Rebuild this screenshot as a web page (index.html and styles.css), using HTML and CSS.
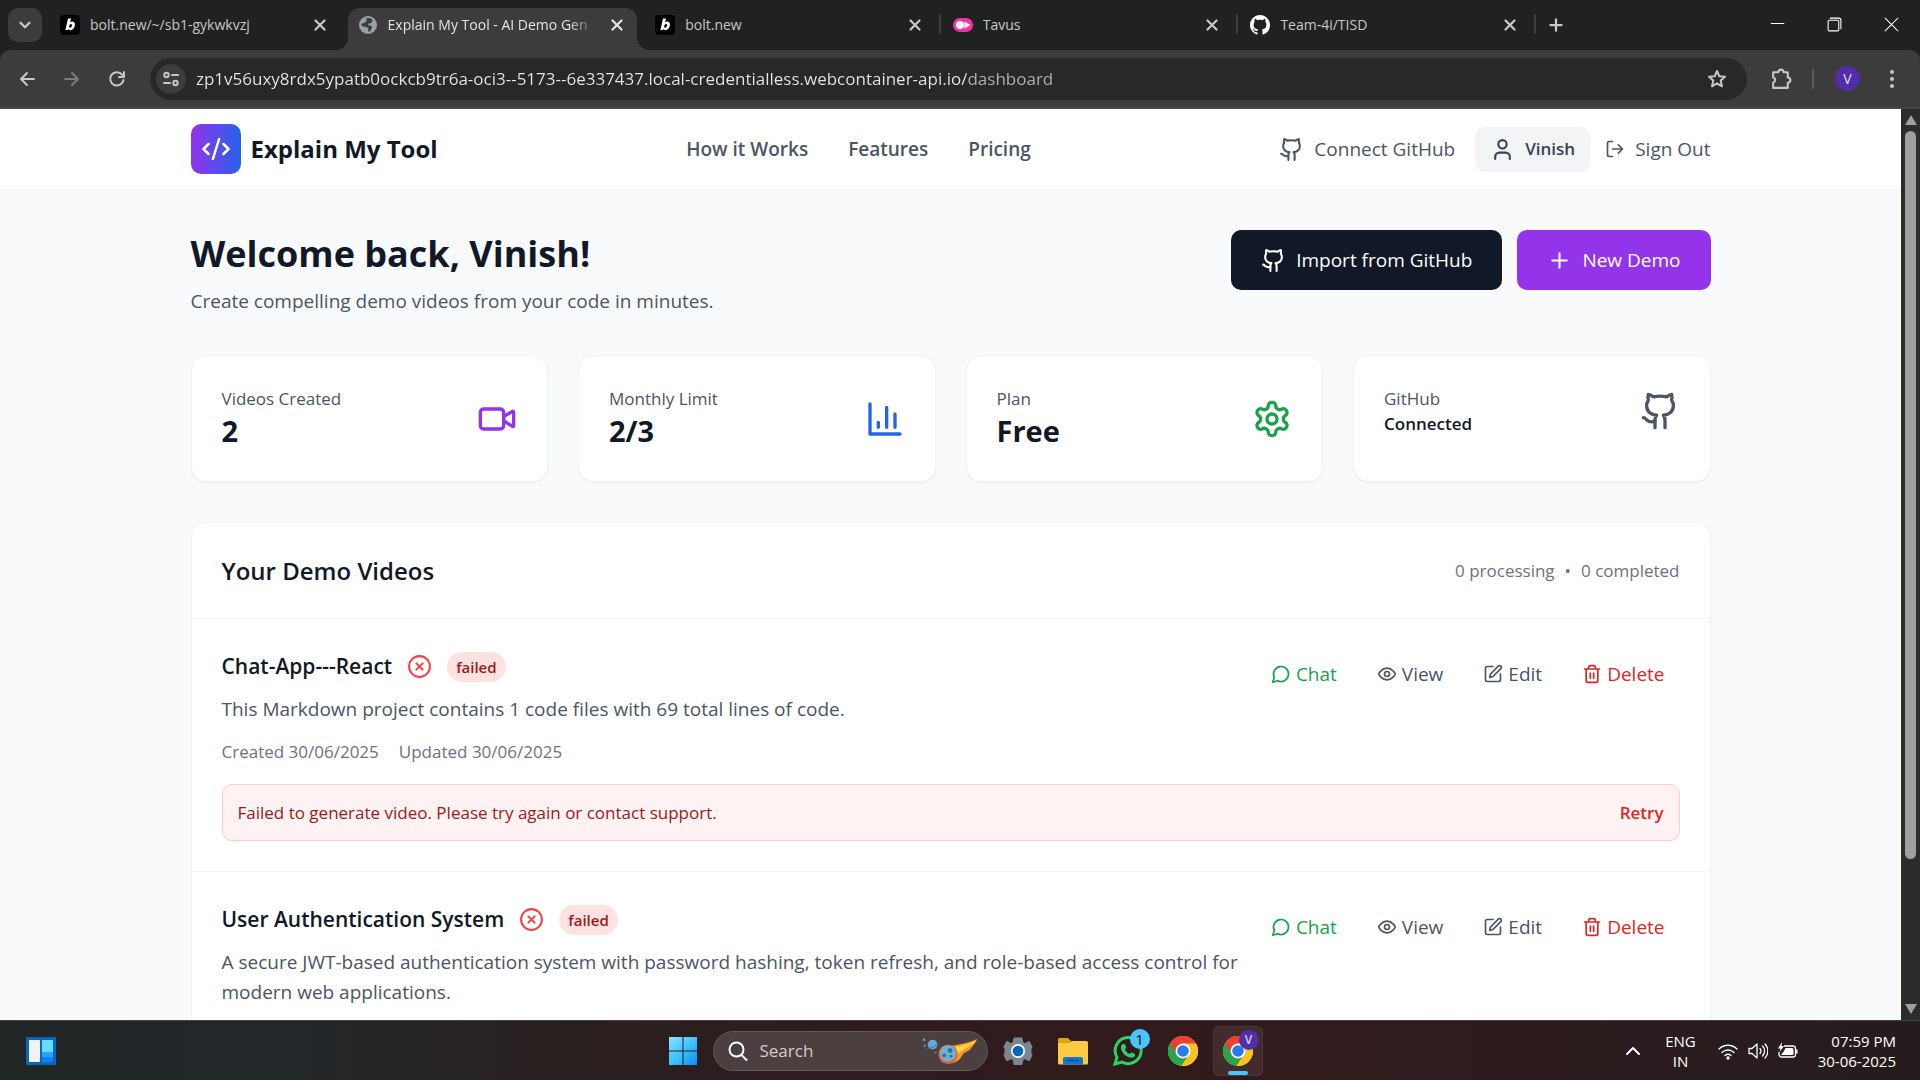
FILE: index.html
```html
<!DOCTYPE html>
<html lang="en">
<head>
<meta charset="utf-8">
<title>Explain My Tool - AI Demo Generator</title>
<meta name="viewport" content="width=device-width, initial-scale=1">
<link rel="stylesheet" href="styles.css">
</head>
<body>
<svg class="sprite" aria-hidden="true">
  <symbol id="github" viewBox="0 0 24 24"><path d="M15 22v-4a4.8 4.8 0 0 0-1-3.5c3 0 6-2 6-5.5.08-1.25-.27-2.48-1-3.5.28-1.15.28-2.35 0-3.5 0 0-1 0-3 1.5-2.64-.5-5.36-.5-8 0C6 2 5 2 5 2c-.3 1.15-.3 2.35 0 3.5A5.403 5.403 0 0 0 4 9c0 3.5 3 5.5 6 5.5-.39.49-.68 1.05-.85 1.65-.17.6-.22 1.23-.15 1.85v4"/><path d="M9 18c-4.51 2-5-2-7-2"/></symbol>
  <symbol id="x-circle" viewBox="0 0 24 24"><circle cx="12" cy="12" r="10"/><path d="m15 9-6 6M9 9l6 6"/></symbol>
  <symbol id="chat" viewBox="0 0 24 24"><path d="M7.9 20A9 9 0 1 0 4 16.1L2 22Z"/></symbol>
  <symbol id="eye" viewBox="0 0 24 24"><path d="M2 12s3-7 10-7 10 7 10 7-3 7-10 7-10-7-10-7Z"/><circle cx="12" cy="12" r="3"/></symbol>
  <symbol id="edit" viewBox="0 0 24 24"><path d="M12 3H5a2 2 0 0 0-2 2v14a2 2 0 0 0 2 2h14a2 2 0 0 0 2-2v-7"/><path d="M18.375 2.625a2.121 2.121 0 1 1 3 3L12 15l-4 1 1-4Z"/></symbol>
  <symbol id="trash" viewBox="0 0 24 24"><path d="M3 6h18M19 6v14a2 2 0 0 1-2 2H7a2 2 0 0 1-2-2V6M8 6V4a2 2 0 0 1 2-2h4a2 2 0 0 1 2 2v2M10 11v6M14 11v6"/></symbol>
  <symbol id="close" viewBox="0 0 16 16"><path d="M4 4l8 8M12 4L4 12"/></symbol>
  <symbol id="bolt" viewBox="0 0 20 20"><rect width="20" height="20" rx="4" fill="#000" stroke="none"/><path fill="#fff" stroke="none" fill-rule="evenodd" d="M8 3.500h3l-.8 3.700c.6-.5 1.200-.7 1.900-.7 2 0 3.200 1.400 2.800 3.800-.4 2.800-2.300 4.900-4.500 4.900-1 0-1.700-.4-2.100-1.100l-.4.900H5.400zM9.600 9.800l-.5 2.300c.2.500.6.700 1.100.7 1 0 1.700-1 1.800-2.200.1-.9-.3-1.500-1-1.500-.6 0-1 .3-1.400.7z"/></symbol>
  <symbol id="chrome" viewBox="0 0 30 30"><circle cx="15" cy="15" r="15" fill="#fcc31e"/><path d="M15 15 2 7.500A15 15 0 0 0 12.500 29.800L21.500 18.700Z" fill="#2ba24c"/><path d="M15 15H28.500L28 7.500A15 15 0 0 0 2 7.500L8.500 18.700Z" fill="#e94235"/><path d="M8.500 18.700 2 7.500A15 15 0 0 0 13.500 29.900L20 19z" fill="#2ba24c"/><path d="M15 7.500H28A15 15 0 0 1 13.500 29.900L21.500 18.700Z" fill="#fcc31e"/><circle cx="15" cy="15" r="7.500" fill="#fff"/><circle cx="15" cy="15" r="5.800" fill="#2a7bea"/></symbol>
</svg>

<header class="browser">
  <div class="tabstrip">
    <button class="tab-search" aria-label="Search tabs"><svg class="line" viewBox="0 0 16 16"><path d="m4 6 4 4 4-4"/></svg></button>
    <div class="tabs">
      <div class="tab">
        <svg class="favicon"><use href="#bolt"/></svg><button class="tab-title">bolt.new/~/sb1-gykwkvzj</button>
        <button class="tab-close" aria-label="Close tab"><svg class="line"><use href="#close"/></svg></button>
      </div>
      <div class="tab tab-active">
        <svg class="favicon" viewBox="0 0 20 20"><circle cx="10" cy="10" r="9" fill="#9aa0a6"/><path d="M8 3.500c2-1 5-.5 6.500 1.500l-1 3-3 .5-.5 2h3l1 2-2 4h-2l.5-3-2-1.500-4-.5L3 9l3-1 2-2z" fill="#3c3c3c"/><path d="M5 4.500 9 4 8 7 4.500 8z" fill="#9aa0a6"/></svg><button class="tab-title">Explain My Tool - AI Demo Gen</button>
        <button class="tab-close" aria-label="Close tab"><svg class="line"><use href="#close"/></svg></button>
      </div>
      <div class="tab tab-divided">
        <svg class="favicon"><use href="#bolt"/></svg><button class="tab-title">bolt.new</button>
        <button class="tab-close" aria-label="Close tab"><svg class="line"><use href="#close"/></svg></button>
      </div>
      <div class="tab tab-divided">
        <svg class="favicon" viewBox="0 0 20 20"><rect y="3" width="20" height="14" rx="7" fill="#fb2fa5"/><circle cx="7" cy="10" r="4" fill="#fff"/><path d="m11.500 6.500 6 3.500-6 3.500z" fill="#fff"/></svg><button class="tab-title">Tavus</button>
        <button class="tab-close" aria-label="Close tab"><svg class="line"><use href="#close"/></svg></button>
      </div>
      <div class="tab tab-divided">
        <svg class="favicon" viewBox="0 0 16 16"><path fill="#fff" d="M8 0C3.580 0 0 3.580 0 8c0 3.540 2.290 6.530 5.470 7.590.4.070.55-.17.55-.38 0-.19-.01-.82-.01-1.490-2.010.37-2.530-.49-2.690-.94-.09-.23-.48-.94-.82-1.130-.28-.15-.68-.52-.01-.53.63-.01 1.080.58 1.230.82.72 1.210 1.870.87 2.330.66.07-.52.28-.87.51-1.070-1.780-.2-3.640-.89-3.640-3.950 0-.87.31-1.590.82-2.150-.08-.2-.36-1.020.08-2.120 0 0 .67-.21 2.200.82.64-.18 1.320-.27 2-.27s1.360.09 2 .27c1.530-1.040 2.200-.82 2.200-.82.44 1.100.16 1.920.08 2.120.51.56.82 1.270.82 2.150 0 3.070-1.870 3.750-3.650 3.950.29.25.54.73.54 1.480 0 1.070-.01 1.930-.01 2.200 0 .21.15.46.55.38A8.010 8.010 0 0 0 16 8c0-4.420-3.580-8-8-8z"/></svg><button class="tab-title">Team-4i/TISD</button>
        <button class="tab-close" aria-label="Close tab"><svg class="line"><use href="#close"/></svg></button>
      </div>
    </div>
    <button class="new-tab" aria-label="New tab"><svg class="line" viewBox="0 0 16 16"><path d="M8 3v10M3 8h10"/></svg></button>
    <div class="window-controls">
      <button aria-label="Minimize"><svg class="line thin" viewBox="0 0 16 16"><path d="M2 7h12"/></svg></button>
      <button aria-label="Restore"><svg class="line thin" viewBox="0 0 16 16"><rect x="2" y="4" width="10" height="10" rx="1"/><path d="M4 2h8a2 2 0 0 1 2 2v8"/></svg></button>
      <button aria-label="Close"><svg class="line thin" viewBox="0 0 16 16"><path d="m2 2 12 12M14 2 2 14"/></svg></button>
    </div>
  </div>
  <div class="toolbar">
    <button class="tool" aria-label="Back"><svg class="line" viewBox="0 0 20 20"><path d="M17 10H4M10 4l-6 6 6 6"/></svg></button>
    <button class="tool tool-off" aria-label="Forward"><svg class="line" viewBox="0 0 20 20"><path d="M3 10h13M10 4l6 6-6 6"/></svg></button>
    <button class="tool" aria-label="Reload"><svg class="line" viewBox="0 0 20 20"><path d="M16.500 11A6.700 6.700 0 1 1 15 5.500L17 7.500M17 3v5h-5"/></svg></button>
    <div class="omnibox">
      <button class="site-info" aria-label="Site information"><svg class="line" viewBox="0 0 20 20"><circle cx="5.500" cy="6" r="2.200"/><path d="M11 6h6M3 14h6"/><circle cx="14.500" cy="14" r="2.200"/></svg></button>
      <input class="url" type="text" aria-label="Address" value="zp1v56uxy8rdx5ypatb0ockcb9tr6a-oci3--5173--6e337437.local-credentialless.webcontainer-api.io/dashboard">
      <button class="tool" aria-label="Bookmark"><svg class="line" viewBox="0 0 20 20"><path d="m10 2 2.300 5.300 5.700.5-4.300 3.800 1.300 5.700-5-3-5 3 1.300-5.700L2 7.800l5.700-.5z"/></svg></button>
    </div>
    <button class="tool" aria-label="Extensions"><svg class="line big" viewBox="0 0 24 24"><path d="M4 6h5a2 2 0 0 1 5 0h4v5a2.300 2.300 0 0 1 0 5v5H4v-5a2.600 2.600 0 0 0 0-5z"/></svg></button>
    <span class="tool-divider"></span>
    <button class="profile" aria-label="Profile">V</button>
    <button class="tool" aria-label="Menu"><svg viewBox="0 0 20 20" fill="#c7c7c7"><circle cx="10" cy="3" r="2"/><circle cx="10" cy="10" r="2"/><circle cx="10" cy="17" r="2"/></svg></button>
  </div>
</header>

<div class="viewport">
  <div class="site">
    <nav class="nav">
      <div class="container nav-row">
        <a class="brand" href="#"><span class="brand-mark"><svg class="line" viewBox="0 0 24 24"><path d="m18 16 4-4-4-4M6 8l-4 4 4 4M14.500 4l-5 16"/></svg></span>Explain My Tool</a>
        <div class="nav-links"><a href="#">How it Works</a><a href="#">Features</a><a href="#">Pricing</a></div>
        <div class="nav-user">
          <button class="connect"><svg class="line"><use href="#github"/></svg>Connect GitHub</button>
          <button class="user"><svg class="line" viewBox="0 0 24 24"><path d="M19 21v-2a4 4 0 0 0-4-4H9a4 4 0 0 0-4 4v2"/><circle cx="12" cy="7" r="4"/></svg>Vinish</button>
          <button class="signout"><svg class="line" viewBox="0 0 24 24"><path d="M9 21H5a2 2 0 0 1-2-2V5a2 2 0 0 1 2-2h4M16 17l5-5-5-5M21 12H9"/></svg>Sign Out</button>
        </div>
      </div>
    </nav>
    <main class="container main">
      <div class="intro">
        <div><h1>Welcome back, Vinish!</h1><p>Create compelling demo videos from your code in minutes.</p></div>
        <div class="intro-actions">
          <button class="btn btn-dark"><svg class="line"><use href="#github"/></svg>Import from GitHub</button>
          <button class="btn btn-purple"><svg class="line" viewBox="0 0 24 24"><path d="M5 12h14M12 5v14"/></svg>New Demo</button>
        </div>
      </div>
      <section class="stats">
        <div class="stat"><div><p class="label">Videos Created</p><p class="value">2</p></div><svg class="line purple" viewBox="0 0 24 24"><path d="m16 13 5.223 3.482a.5.5 0 0 0 .777-.416V7.870a.5.5 0 0 0-.752-.432L16 10.500"/><rect x="2" y="6" width="14" height="12" rx="2"/></svg></div>
        <div class="stat"><div><p class="label">Monthly Limit</p><p class="value">2/3</p></div><svg class="line blue" viewBox="0 0 24 24"><path d="M3 3v18h18M18 17V9M13 17V5M8 17v-3"/></svg></div>
        <div class="stat"><div><p class="label">Plan</p><p class="value">Free</p></div><svg class="line green" viewBox="0 0 24 24"><path d="M12.220 2h-.44a2 2 0 0 0-2 2v.18a2 2 0 0 1-1 1.730l-.43.25a2 2 0 0 1-2 0l-.15-.08a2 2 0 0 0-2.730.73l-.22.38a2 2 0 0 0 .73 2.730l.15.1a2 2 0 0 1 1 1.720v.51a2 2 0 0 1-1 1.740l-.15.09a2 2 0 0 0-.73 2.730l.22.38a2 2 0 0 0 2.730.73l.15-.08a2 2 0 0 1 2 0l.43.25a2 2 0 0 1 1 1.730V20a2 2 0 0 0 2 2h.44a2 2 0 0 0 2-2v-.18a2 2 0 0 1 1-1.730l.43-.25a2 2 0 0 1 2 0l.15.08a2 2 0 0 0 2.730-.73l.22-.39a2 2 0 0 0-.73-2.730l-.15-.08a2 2 0 0 1-1-1.740v-.5a2 2 0 0 1 1-1.740l.15-.09a2 2 0 0 0 .73-2.730l-.22-.38a2 2 0 0 0-2.730-.73l-.15.08a2 2 0 0 1-2 0l-.43-.25a2 2 0 0 1-1-1.730V4a2 2 0 0 0-2-2z"/><circle cx="12" cy="12" r="3"/></svg></div>
        <div class="stat stat-top"><div><p class="label">GitHub</p><p class="status">Connected</p></div><svg class="line gray"><use href="#github"/></svg></div>
      </section>
      <section class="videos">
        <div class="videos-head"><h2>Your Demo Videos</h2><div class="counts"><span>0 processing</span><span>•</span><span>0 completed</span></div></div>
        <article class="video">
          <div class="video-row">
            <div class="video-text">
              <div class="video-title"><h3>Chat-App---React</h3><svg class="line failed-icon"><use href="#x-circle"/></svg><span class="badge">failed</span></div>
              <p class="desc">This Markdown project contains 1 code files with 69 total lines of code.</p>
              <div class="dates"><span>Created 30/06/2025</span><span>Updated 30/06/2025</span></div>
            </div>
            <div class="actions">
              <button class="green"><svg class="line"><use href="#chat"/></svg>Chat</button>
              <button class="gray"><svg class="line"><use href="#eye"/></svg>View</button>
              <button class="gray"><svg class="line"><use href="#edit"/></svg>Edit</button>
              <button class="red"><svg class="line"><use href="#trash"/></svg>Delete</button>
            </div>
          </div>
          <div class="error"><p>Failed to generate video. Please try again or contact support.</p><button>Retry</button></div>
        </article>
        <article class="video">
          <div class="video-row">
            <div class="video-text">
              <div class="video-title"><h3>User Authentication System</h3><svg class="line failed-icon"><use href="#x-circle"/></svg><span class="badge">failed</span></div>
              <p class="desc">A secure JWT-based authentication system with password hashing, token refresh, and role-based access control for modern web applications.</p>
            </div>
            <div class="actions">
              <button class="green"><svg class="line"><use href="#chat"/></svg>Chat</button>
              <button class="gray"><svg class="line"><use href="#eye"/></svg>View</button>
              <button class="gray"><svg class="line"><use href="#edit"/></svg>Edit</button>
              <button class="red"><svg class="line"><use href="#trash"/></svg>Delete</button>
            </div>
          </div>
        </article>
      </section>
    </main>
  </div>
  <div class="scrollbar" aria-hidden="true">
    <svg viewBox="0 0 14 14"><path d="M7 2 13 12H1z"/></svg>
    <div class="track"><div class="thumb"></div></div>
    <svg viewBox="0 0 14 14"><path d="M7 12 1 2h12z"/></svg>
  </div>
</div>

<footer class="taskbar">
  <div class="task-left">
    <button class="task" aria-label="Widgets"><svg viewBox="0 0 30 30"><rect x="0" y="1" width="30" height="28" rx="1" fill="#0b66bd"/><rect x="3" y="4" width="11" height="22" rx="1" fill="#f2f2f2"/><path fill="#67dbff" d="M16 4h11v12H16z"/><path fill="#22a5fa" d="M16 16h11v5H16z"/><path fill="#0a84f0" d="M16 21h11v5H16z"/></svg></button>
  </div>
  <div class="task-center">
    <button class="task" aria-label="Start"><svg viewBox="0 0 30 30"><defs><linearGradient id="win" x1="0" y1="0" x2="1" y2="1"><stop offset="0" stop-color="#8be3ff"/><stop offset=".5" stop-color="#3fc3fc"/><stop offset="1" stop-color="#0a8dfb"/></linearGradient></defs><path fill="url(#win)" d="M1 1h13.500v13.500H1zM15.500 1H29v13.500H15.500zM1 15.500h13.500V29H1zM15.500 15.500H29V29H15.500z"/></svg></button>
    <label class="search">
      <svg class="line" viewBox="0 0 20 20"><circle cx="8.500" cy="8.500" r="7"/><path d="m13.500 14 5 5"/></svg>
      <input type="text" placeholder="Search" aria-label="Search">
      <svg class="comet" viewBox="0 0 60 30"><circle cx="12" cy="9" r="5" fill="#63a9d3"/><path d="M5 13c4 1 10-2 14-7" fill="none" stroke="#2f6f9b"/><circle cx="3" cy="4" r="1.300" fill="#63a9d3"/><circle cx="4" cy="10" r="1" fill="#63a9d3"/><circle cx="15" cy="17" r="1" fill="#8a7c80"/><path d="M22 11C33 10 48 8 58 3c-2 6-5 7-7 11-4 3-6 2-9 7-3 6-9 8-14 7-6-1-11-12-6-17z" fill="#f79a2a"/><path d="M36 11c9-1 15-3 21-7-3 5-7 7-11 9-4 3-6 3-9 7z" fill="#ffd640"/><circle cx="28" cy="19" r="10" fill="#ec5b35"/><circle cx="28" cy="18" r="8.500" fill="#6bb1d6"/><circle cx="30" cy="15" r="2.500" fill="#376f94"/><circle cx="24" cy="20" r="2" fill="#376f94"/><circle cx="31" cy="21" r="1.500" fill="#376f94"/></svg>
    </label>
    <button class="task" aria-label="Settings"><svg viewBox="0 0 30 30"><path fill="#7d868e" stroke="#7d868e" stroke-width="2" stroke-linejoin="round" d="M11.500 2.500h7l1 4.500 2.500 1.300 4-2.300 2.500 5-1 1.500v5l1 1.500-2.500 5-4-2-2.500 1.200-1 4.800h-7l-1-4.800L8 22l-4 2-2.500-5 1-1.500v-5L1.500 11 4 6l4 2.300L10.500 7z"/><circle cx="15" cy="15" r="7" fill="#fff"/><circle cx="15" cy="15" r="5.300" fill="#0a64b8"/></svg></button>
    <button class="task" aria-label="File Explorer"><svg viewBox="0 0 30 30"><path fill="#e0a30a" d="M0 3.500A1.500 1.500 0 0 1 1.500 2H10l3 3v4H0z"/><path fill="#fdcb3f" d="M0 7h11l3-2h14.500A1.500 1.500 0 0 1 30 6.500V27a1.500 1.500 0 0 1-1.500 1.500h-27A1.500 1.500 0 0 1 0 27z"/><path fill="#1177cf" d="M5 28.500V23a2 2 0 0 1 2-2h16a2 2 0 0 1 2 2v5.500z"/><path stroke="#074f96" stroke-width="1.500" d="M9 24.500h12"/></svg></button>
    <button class="task" aria-label="WhatsApp, 1 notification"><svg viewBox="0 0 30 30"><path fill="none" stroke="#25d366" stroke-width="3" d="M2 28l2-6.800A13 13 0 1 1 9 26z"/><path fill="#25d366" d="M9 8.500c1-1.200 2.500-1 3 0l1.200 2.800c.2.700-1.200 2-1.200 2.300.8 2 2.500 3.500 4.600 4.500.5 0 1.600-1.800 2.200-1.600l2.800 1.300c1.200.7.4 2.700-1 3.500-4 2-12-3-12.700-9-.1-1.600.4-3 1.100-3.800z"/></svg><span class="count">1</span></button>
    <button class="task" aria-label="Chrome"><svg><use href="#chrome"/></svg></button>
    <button class="task task-active" aria-label="Chrome, profile V"><svg><use href="#chrome"/></svg><span class="who">V</span></button>
  </div>
  <div class="tray">
    <button class="tray-btn" aria-label="Show hidden icons"><svg class="line" viewBox="0 0 20 20"><path d="m4 13 6-6 6 6"/></svg></button>
    <button class="lang">ENG<br>IN</button>
    <button class="tray-icons" aria-label="Network, volume, battery">
      <svg class="line" viewBox="0 0 20 20"><path d="M1 8a12.700 12.700 0 0 1 18 0M4 11.500a8.500 8.500 0 0 1 12 0M7 14.500a4.200 4.200 0 0 1 6 0"/><circle cx="10" cy="17" r="1"/></svg>
      <svg class="line" viewBox="0 0 20 20"><path d="M1 7.500h3l5-4.500v14l-5-4.500H1zM12 7.500a4 4 0 0 1 0 5M14.500 5a7 7 0 0 1 0 10M17 3a10 10 0 0 1 0 14"/></svg>
      <svg viewBox="0 0 20 20"><path fill="none" stroke="#fff" stroke-width="1.300" d="M6 5h9a2.500 2.500 0 0 1 2.500 2.500v6A2.500 2.500 0 0 1 15 16H3.500A2.500 2.500 0 0 1 1 13.500V11"/><path fill="#fff" d="M7.500 7H14a1.500 1.500 0 0 1 1.500 1.500v4A1.500 1.500 0 0 1 14 14H3l3-4zM18 8.500h1.500v4H18zM4 1 0 7.500h2.500L1.500 11 6 5H3.500z"/></svg>
    </button>
    <button class="clock">07:59 PM<br>30-06-2025</button>
  </div>
</footer>
</body>
</html>
```
FILE: styles.css
```css
* { box-sizing: border-box; }

body {
  margin: 0;
  height: 100vh;
  display: flex;
  flex-direction: column;
  overflow: hidden;
  font-family: "Open Sans", "Noto Sans", sans-serif;
  font-size: 19px;
  line-height: 30px;
  color: #4b5563;
}

h1, h2, h3, p { margin: 0; }
a { color: inherit; text-decoration: none; }
button {
  font: inherit;
  color: inherit;
  background: none;
  border: 0;
  padding: 0;
  display: inline-flex;
  align-items: center;
  justify-content: center;
  white-space: nowrap;
}
svg { display: block; flex: none; }
.sprite { position: absolute; width: 0; height: 0; }
.line {
  fill: none;
  stroke: currentColor;
  stroke-width: 2;
  stroke-linecap: round;
  stroke-linejoin: round;
}

/* Browser frame */
.browser { background: #202221; color: #c7c7c7; font-size: 14px; line-height: 20px; }
.tabstrip { display: flex; align-items: center; height: 50px; padding-left: 8px; }
.tab-search { width: 34px; height: 34px; border-radius: 10px; background: #3c3c3c; margin-right: 6px; }
.tab-search svg { width: 18px; height: 18px; }
.tabs { display: flex; align-self: stretch; flex: 0 1 1488px; min-width: 0; }
.tab {
  flex: 1 1 0;
  min-width: 0;
  display: flex;
  align-items: center;
  gap: 10px;
  padding: 0 17px 0 12px;
  position: relative;
}
.tab-divided::after {
  content: "";
  position: absolute;
  right: 0;
  top: 14px;
  width: 2px;
  height: 20px;
  background: #3c3c3c;
}
.tab-active {
  margin: 8px 6px 0 2px;
  padding: 0 11px 8px 10px;
  background: #3c3c3c;
  color: #e3e3e3;
  border-radius: 12px 12px 0 0;
}
.tab-active::before, .tab-active::after {
  content: "";
  position: absolute;
  bottom: 0;
  width: 12px;
  height: 12px;
}
.tab-active::before { left: -12px; background: radial-gradient(circle at 0 0, transparent 12px, #3c3c3c 12px); }
.tab-active::after { right: -12px; background: radial-gradient(circle at 100% 0, transparent 12px, #3c3c3c 12px); }
.favicon { width: 20px; height: 20px; }
.tab-title {
  flex: 1;
  display: block;
  text-align: left;
  overflow: hidden;
}
.tab-active .tab-title {
  -webkit-mask-image: linear-gradient(to right, #000 calc(100% - 30px), transparent);
  mask-image: linear-gradient(to right, #000 calc(100% - 30px), transparent);
}
.tab-close svg, .new-tab svg { width: 18px; height: 18px; }
.new-tab { width: 40px; height: 34px; }
.window-controls { display: flex; margin-left: auto; align-self: stretch; color: #fff; }
.window-controls button { width: 57px; padding-bottom: 2px; }
.window-controls svg { width: 17px; height: 17px; }
.thin { stroke-width: 1; }

.toolbar {
  display: flex;
  align-items: center;
  height: 59px;
  padding: 0 11px 0 10px;
  gap: 11px;
  background: #3c3c3c;
  border-bottom: 2px solid #474747;
  border-radius: 10px 10px 0 0;
}
.tool { width: 34px; height: 34px; }
.tool svg { width: 20px; height: 20px; }
.tool .big { width: 25px; height: 25px; }
.tool-off { color: #7a7a7a; }
.omnibox {
  flex: 1;
  display: flex;
  align-items: center;
  height: 42px;
  padding: 0 13px 0 6px;
  border-radius: 21px;
  background: #282828;
  margin-left: 5px;
  margin-right: 6px;
}
.site-info { width: 30px; height: 30px; border-radius: 50%; background: #3c3c3c; margin-right: 10px; }
.site-info svg { width: 20px; height: 20px; }
.url {
  flex: 1;
  min-width: 0;
  border: 0;
  padding: 0;
  font: inherit;
  font-size: 17px;
  line-height: 26px;
  color: transparent;
  background: linear-gradient(to right, #e8e8e8 770px, #b0b4b4 770px);
  -webkit-background-clip: text;
  background-clip: text;
}
.tool-divider { width: 2px; height: 20px; background: #5c5c5c; margin-left: 3px; }
.profile { width: 25px; height: 25px; border-radius: 50%; background: #512da8; color: #e6dcff; margin: 0 4px 0 10px; }

/* Page */
.viewport { flex: 1; min-height: 0; display: flex; background: #f9fafb; }
.site { flex: 1; min-width: 0; overflow: hidden; }
.container { max-width: 1600px; margin: 0 auto; padding: 0 40px; }
.nav { background: #fff; border-bottom: 1px solid #f3f4f6; }
.nav-row { display: flex; align-items: center; justify-content: space-between; height: 80px; }
.brand { display: flex; align-items: center; gap: 10px; font-size: 24px; font-weight: 700; color: #111827; }
.brand-mark {
  display: flex;
  align-items: center;
  justify-content: center;
  width: 50px;
  height: 50px;
  border-radius: 10px;
  color: #fff;
  background: linear-gradient(to right, #9333ea, #2563eb);
}
.brand-mark svg { width: 30px; height: 30px; }
.nav-links { display: flex; gap: 40px; font-weight: 600; }
.nav-user { display: flex; align-items: center; }
.nav-user svg { width: 25px; height: 25px; }
.nav-user button { gap: 10px; }
.nav-user .user { margin: 0 15px 0 20px; padding: 0 15px; height: 45px; border-radius: 10px; background: #f3f4f6; font-size: 17px; font-weight: 600; color: #374151; }
.nav-user .signout svg { width: 20px; height: 20px; }

.main { padding-top: 40px; }
.intro { display: flex; justify-content: space-between; align-items: flex-start; margin-bottom: 40px; }
h1 { font-size: 36px; line-height: 48px; font-weight: 700; color: #111827; margin-bottom: 8px; }
.intro > div:first-child { height: 85px; }
.intro-actions { display: flex; gap: 15px; }
.btn { gap: 10px; height: 60px; padding: 0 30px; border-radius: 10px; color: #fff; }
.btn svg { width: 25px; height: 25px; }
.btn-dark { background: #111827; }
.btn-purple { background: #9333ea; }

.stats { display: grid; grid-template-columns: repeat(4, 1fr); gap: 30px; margin-bottom: 40px; }
.stat, .videos { background: #fff; border: 1px solid #f3f4f6; border-radius: 15px; box-shadow: 0 1px 2px rgba(0, 0, 0, .06); }
.stat { display: flex; justify-content: space-between; align-items: center; padding: 30px; }
.stat svg { width: 40px; height: 40px; }
.stat-top { align-items: flex-start; }
.stat-top svg { margin-top: 5px; }
.label { font-size: 17px; line-height: 25px; font-weight: 500; }
.value { font-size: 29px; line-height: 40px; font-weight: 700; color: #111827; }
.status { font-size: 17px; line-height: 25px; font-weight: 600; color: #111827; }
.purple { color: #9333ea; }
.blue { color: #2563eb; }
.green { color: #16a34a; }
.gray { color: #4b5563; }
.red { color: #dc2626; }

.videos-head { display: flex; justify-content: space-between; align-items: center; padding: 30px; }
h2 { font-size: 24px; line-height: 35px; font-weight: 600; color: #111827; }
.counts { display: flex; gap: 10px; font-size: 17px; line-height: 25px; color: #6b7280; }
.video { padding: 30px; border-top: 1px solid #f3f4f6; }
.video-row { display: flex; align-items: flex-start; justify-content: space-between; gap: 5px; }
.video-text { flex: 1; min-width: 0; }
.video-title { display: flex; align-items: center; gap: 15px; margin-bottom: 10px; }
h3 { font-size: 21px; line-height: 35px; font-weight: 600; color: #111827; }
.failed-icon { width: 25px; height: 25px; color: #ef4444; }
.badge { padding: 0 9px; border-radius: 15px; background: #fee2e2; color: #991b1b; font-size: 15px; font-weight: 600; }
.dates { display: flex; gap: 20px; margin-top: 15px; font-size: 17px; line-height: 25px; color: #6b7280; }
.actions { display: flex; gap: 10px; }
.actions button { gap: 5px; height: 50px; padding: 0 15px; }
.actions svg { width: 20px; height: 20px; }
.error {
  display: flex;
  justify-content: space-between;
  margin-top: 20px;
  padding: 15px;
  border: 1px solid #fecaca;
  border-radius: 10px;
  background: #fef2f2;
  color: #991b1b;
  font-size: 17px;
  line-height: 25px;
}
.error button { font-weight: 600; color: #dc2626; }

.scrollbar { width: 19px; display: flex; flex-direction: column; align-items: center; padding: 4px 0; gap: 4px; background: #2c2c2c; }
.scrollbar svg { width: 14px; height: 14px; fill: #9f9f9f; }
.track { flex: 1; width: 11px; }
.thumb { height: 84%; border-radius: 6px; background: #9f9f9f; }

/* Taskbar */
.taskbar {
  display: grid;
  grid-template-columns: 1fr auto 1fr;
  align-items: center;
  height: 60px;
  padding: 0 12px;
  border-top: 1px solid #474344;
  background: linear-gradient(to right, #202626, #222729 15%, #2a1f1f 30%, #2f1b1d 50%, #331a1c 67%, #2d1c1e 77%, #251c1e);
  color: #fff;
  font-size: 15px;
  line-height: 20px;
}
.task-left { padding-left: 4px; }
.task-center { display: flex; align-items: center; gap: 5px; }
.task { width: 50px; height: 50px; border-radius: 6px; position: relative; }
.task svg { width: 30px; height: 30px; }
.task-active { background: rgba(255, 255, 255, .08); border: 1px solid rgba(255, 255, 255, .06); }
.task-active::after {
  content: "";
  position: absolute;
  bottom: 0;
  left: 14px;
  width: 20px;
  height: 4px;
  border-radius: 2px;
  background: #4cc2ff;
}
.count, .who {
  position: absolute;
  top: 3px;
  right: 3px;
  width: 20px;
  height: 20px;
  border-radius: 50%;
  text-align: center;
}
.count { background: #4cc2ff; color: #111; }
.who { background: #512da8; color: #d8ccf2; font-size: 12px; font-weight: 600; }
.search {
  display: flex;
  align-items: center;
  gap: 12px;
  width: 275px;
  height: 40px;
  padding: 0 8px 0 14px;
  border-radius: 20px;
  border: 1px solid #62575a;
  background: #4b3f40;
}
.search svg { width: 20px; height: 20px; }
.search .comet { width: 58px; height: 29px; }
.search input { flex: 1; min-width: 0; border: 0; padding: 0; background: none; color: #fff; font: inherit; font-size: 17px; }
.search input::placeholder { color: #d2cccd; opacity: 1; }
.tray { display: flex; justify-content: flex-end; align-items: center; padding-right: 12px; }
.tray-btn { margin-right: 22px; }
.tray-btn svg { width: 20px; height: 20px; }
.lang { text-align: center; margin-right: 22px; }
.tray-icons { gap: 10px; margin-right: 20px; }
.tray-icons svg { width: 20px; height: 20px; }
.tray-icons .line { stroke-width: 1.3; }
.clock { text-align: right; }
```
